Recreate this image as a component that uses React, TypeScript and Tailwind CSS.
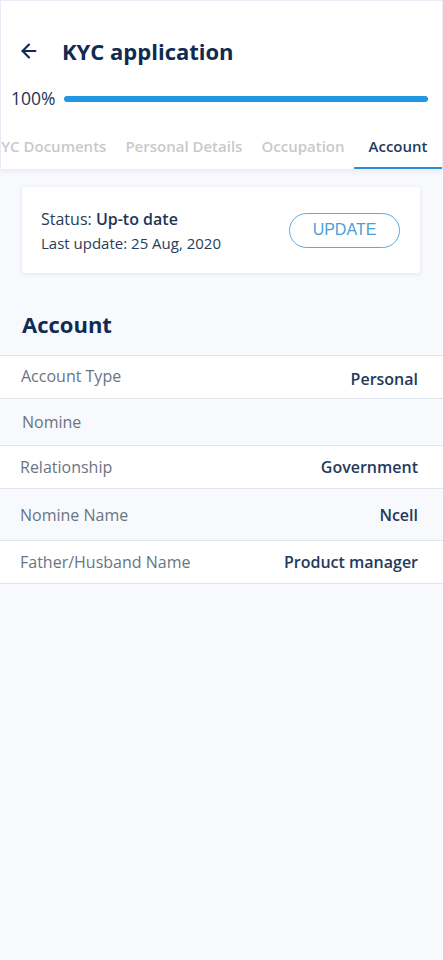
import { ArrowLeft } from 'lucide-react'

const rows = [
  { label: 'Account Type', value: 'Personal', h: 'h-[43px]', bg: 'bg-white', lOff: 'pb-[2px] pl-[1px]', vOff: 'pt-[4px]' },
  { label: 'Nomine', value: '', h: 'h-[47px]', bg: 'bg-[#f7f9fd]', lOff: 'pl-[2px]', vOff: '' },
  { label: 'Relationship', value: 'Government', h: 'h-[43px]', bg: 'bg-white', lOff: '', vOff: '' },
  { label: 'Nomine Name', value: 'Ncell', h: 'h-[52px]', bg: 'bg-[#f7f9fd]', lOff: '', vOff: '' },
  { label: 'Father/Husband Name', value: 'Product manager', h: 'h-[43px]', bg: 'bg-white', lOff: '', vOff: '' },
]

const tabs = ['KYC Documents', 'Personal Details', 'Occupation', 'Account']

export default function App() {
  return (
    <div className="min-h-[960px] w-[443px] bg-[#f8f9fd] font-['Open_Sans',sans-serif]">
      {/* Header */}
      <div className="border-x border-t border-[#e9ebf6] bg-white shadow-[0_2px_6px_rgba(30,40,80,0.08)]">
        <div className="flex h-[108px] flex-col">
          <div className="flex h-[73px] items-end pb-[12px] pl-[17px]">
            <ArrowLeft className="h-[22px] w-[22px] text-[#0f2b52]" strokeWidth={2.4} />
            <h1 className="ml-[22px] text-[22px] font-bold leading-none text-[#0f2b52]">KYC application</h1>
          </div>
          <div className="flex items-center pl-[10px] pr-[14px] pt-[16px]">
            <span className="text-[17.5px] leading-none text-[#1c3456]">100%</span>
            <div className="ml-[8px] h-[6px] flex-1 rounded-full bg-[#2196e3]" />
          </div>
        </div>
        <div className="flex h-[60px] justify-end overflow-hidden">
          {tabs.map((t) => {
            const active = t === 'Account'
            return (
              <div
                key={t}
                className={
                  'flex shrink-0 items-center whitespace-nowrap pt-[17px] text-[15px] font-semibold ' +
                  (active
                    ? 'w-[88px] justify-center border-b-2 border-[#2a8fd8] text-[#1f3a60]'
                    : 'border-b-2 border-transparent px-[9.5px] text-[#c9c9c9]')
                }
              >
                {t}
              </div>
            )
          })}
        </div>
      </div>

      {/* Status card */}
      <div className="mx-[22px] mt-[18px] flex h-[86px] w-[398px] items-center justify-between rounded-[3px] bg-white pl-[19px] pr-[20px] shadow-[0_1px_4px_rgba(30,40,80,0.1)]">
        <div className="flex flex-col gap-[2px] pt-[1px] text-[#2a3d58]">
          <p className="text-[16px] leading-[22px]">
            Status: <span className="font-semibold text-[#1f3556]">Up-to date</span>
          </p>
          <p className="text-[15px] leading-[22px]">Last update: 25 Aug, 2020</p>
        </div>
        <button className="flex h-[35px] w-[111px] items-center justify-center rounded-full border border-[#5eaae2] font-['Liberation_Sans',sans-serif] text-[16px] text-[#4a9fd8]">
          UPDATE
        </button>
      </div>

      {/* Account section */}
      <h2 className="mt-[40px] pl-[22px] text-[22px] font-bold leading-none text-[#0f2b52]">Account</h2>
      <div className="mt-[20px] border-t border-[#e1e4ea]">
        {rows.map((r) => (
          <div
            key={r.label}
            className={`flex items-center justify-between border-b border-[#e1e4ea] pl-[20px] pr-[25px] ${r.h} ${r.bg}`}
          >
            <span className={`text-[16px] text-[#6b7482] ${r.lOff}`}>{r.label}</span>
            <span className={`text-[16px] font-semibold text-[#243a5c] ${r.vOff}`}>{r.value}</span>
          </div>
        ))}
      </div>
    </div>
  )
}
